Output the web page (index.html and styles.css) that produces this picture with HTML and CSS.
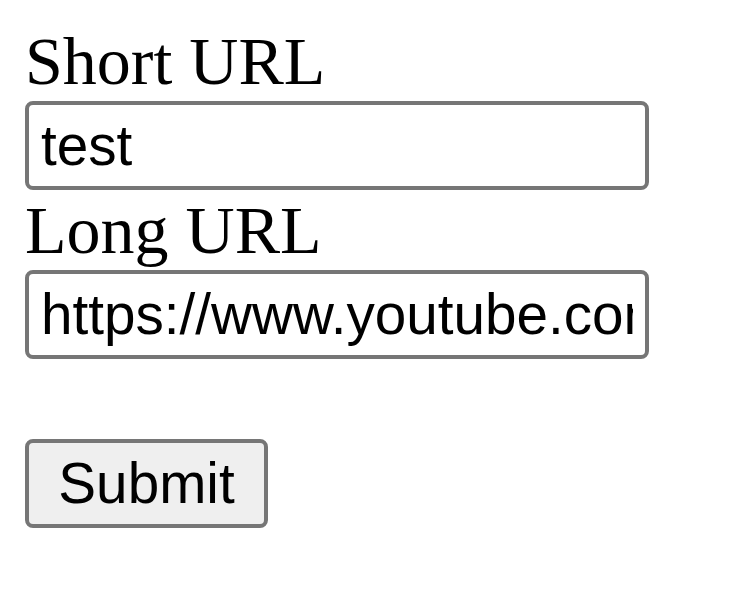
FILE: index.html
```html
<!DOCTYPE html>
<html lang="en">
<head>
<meta charset="utf-8">
<title>Short URL</title>
<link rel="stylesheet" href="styles.css">
</head>
<body>
<form class="form">
  <label class="label" for="short">Short URL</label>
  <input class="field" id="short" type="text" value="test">
  <label class="label" for="long">Long URL</label>
  <input class="field" id="long" type="text" value="https://www.youtube.com/watch?v=dQw4w9WgXcQ">
  <div class="spacer"></div>
  <button class="submit" type="button">Submit</button>
</form>
</body>
</html>
```

FILE: styles.css
```css
html, body {
  margin: 0;
  padding: 0;
  background: #ffffff;
}

.form {
  display: flex;
  flex-direction: column;
  align-items: flex-start;
  padding: 21px 0 0 25px;
}

.label {
  display: block;
  height: 80px;
  font-family: "Liberation Serif", "Times New Roman", serif;
  font-size: 68px;
  line-height: 80px;
  color: #000000;
}

.field {
  box-sizing: border-box;
  width: 624px;
  height: 89px;
  margin: 0;
  padding: 0 12px;
  border: 4px solid #767676;
  border-radius: 8px;
  background: #ffffff;
  font-family: "Liberation Sans", Arial, sans-serif;
  font-size: 56.67px;
  color: #000000;
  outline: none;
}

.spacer {
  height: 80px;
}

.submit {
  box-sizing: border-box;
  width: 243px;
  height: 89px;
  margin: 0;
  padding: 0;
  border: 4px solid #767676;
  border-radius: 8px;
  background: #efefef;
  font-family: "Liberation Sans", Arial, sans-serif;
  font-size: 56.67px;
  color: #000000;
}
```
